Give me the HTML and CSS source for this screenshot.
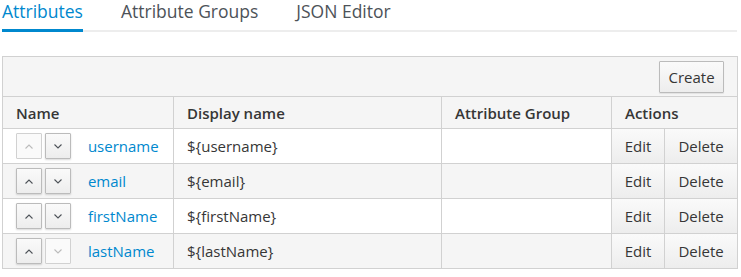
FILE: index.html
```html
<!DOCTYPE html>
<html lang="en">
<head>
  <meta charset="UTF-8" />
  <title>Attributes</title>
  <link rel="stylesheet" href="styles.css">
</head>
<body>

  <!-- Tabs -->
  <ul class="tabs">
    <li class="active"><a href="#">Attributes</a></li>
    <li><a href="#">Attribute Groups</a></li>
    <li><a href="#">JSON Editor</a></li>
  </ul>

  <!-- Attribute table -->
  <table class="attr-table">
    <colgroup>
      <col class="c-name">
      <col class="c-display">
      <col class="c-group">
      <col class="c-edit">
      <col class="c-delete">
    </colgroup>
    <thead>
      <tr class="toolbar">
        <th colspan="5"><button class="btn">Create</button></th>
      </tr>
      <tr class="head">
        <th>Name</th>
        <th>Display name</th>
        <th>Attribute Group</th>
        <th colspan="2">Actions</th>
      </tr>
    </thead>
    <tbody>
      <tr>
        <td class="name-cell">
          <button class="arrow" disabled><svg viewBox="0 0 8 5"><path d="M0.5 4.5 L4 1 L7.5 4.5"/></svg></button><button class="arrow down"><svg viewBox="0 0 8 5"><path d="M0.5 0.5 L4 4 L7.5 0.5"/></svg></button>
          <a href="#">username</a>
        </td>
        <td>${username}</td>
        <td></td>
        <td class="act"><button class="cell-btn">Edit</button></td>
        <td class="act"><button class="cell-btn">Delete</button></td>
      </tr>
      <tr>
        <td class="name-cell">
          <button class="arrow"><svg viewBox="0 0 8 5"><path d="M0.5 4.5 L4 1 L7.5 4.5"/></svg></button><button class="arrow down"><svg viewBox="0 0 8 5"><path d="M0.5 0.5 L4 4 L7.5 0.5"/></svg></button>
          <a href="#">email</a>
        </td>
        <td>${email}</td>
        <td></td>
        <td class="act"><button class="cell-btn">Edit</button></td>
        <td class="act"><button class="cell-btn">Delete</button></td>
      </tr>
      <tr>
        <td class="name-cell">
          <button class="arrow"><svg viewBox="0 0 8 5"><path d="M0.5 4.5 L4 1 L7.5 4.5"/></svg></button><button class="arrow down"><svg viewBox="0 0 8 5"><path d="M0.5 0.5 L4 4 L7.5 0.5"/></svg></button>
          <a href="#">firstName</a>
        </td>
        <td>${firstName}</td>
        <td></td>
        <td class="act"><button class="cell-btn">Edit</button></td>
        <td class="act"><button class="cell-btn">Delete</button></td>
      </tr>
      <tr>
        <td class="name-cell">
          <button class="arrow"><svg viewBox="0 0 8 5"><path d="M0.5 4.5 L4 1 L7.5 4.5"/></svg></button><button class="arrow down" disabled><svg viewBox="0 0 8 5"><path d="M0.5 0.5 L4 4 L7.5 0.5"/></svg></button>
          <a href="#">lastName</a>
        </td>
        <td>${lastName}</td>
        <td></td>
        <td class="act"><button class="cell-btn">Edit</button></td>
        <td class="act"><button class="cell-btn">Delete</button></td>
      </tr>
    </tbody>
  </table>

</body>
</html>
```

FILE: styles.css
```css
body {
  font-family: "Open Sans", "Liberation Sans", sans-serif;
  font-size: 15px;
  color: #363636;
  margin: 0;
  padding: 0 4px 0 2px;
  background: #fff;
}
.tabs {
  list-style: none;
  margin: 0;
  padding: 0;
  display: flex;
  gap: 38px;
  border-bottom: 2px solid #ededed;
  height: 30px;
}
.tabs li {
  height: 30px;
}
.tabs a {
  display: block;
  font-size: 17.5px;
  line-height: 22px;
  color: #4d5258;
  text-decoration: none;
  padding-bottom: 7px;
}
.tabs li.active a {
  color: #0088ce;
  border-bottom: 3px solid #0088ce;
}
.attr-table {
  margin-top: 24px;
  width: 735px;
  border-collapse: collapse;
  border: 1px solid #d1d1d1;
  table-layout: fixed;
}
.c-name { width: 171px; }
.c-display { width: 268px; }
.c-group { width: 170px; }
.c-edit { width: 53px; }
.c-delete { width: 73px; }
.attr-table th, .attr-table td {
  border: 1px solid #d1d1d1;
  text-align: left;
  padding: 0 13px;
  height: 34px;
}
.toolbar th {
  background: #f5f5f5;
  height: 39px;
  text-align: right;
  padding-right: 13px;
}
.head th {
  background: #f5f5f5;
  font-weight: 600;
  height: 31px;
}
.btn {
  font-family: inherit;
  font-size: 15px;
  color: #363636;
  background: linear-gradient(#fafafa, #ededed);
  border: 1px solid #bbb;
  border-radius: 1px;
  box-shadow: 0 1px 1px rgba(3, 3, 3, 0.08);
  width: 65px;
  height: 32px;
  padding: 0;
}
tbody tr:nth-child(even) td {
  background: #f5f5f5;
}
.name-cell {
  white-space: nowrap;
}
.arrow {
  width: 26px;
  height: 26px;
  padding: 0;
  margin-right: 3px;
  vertical-align: middle;
  background: linear-gradient(#fafafa, #ededed);
  border: 1px solid #bbb;
  border-radius: 1px;
  box-shadow: 0 1px 2px rgba(3, 3, 3, 0.15);
}
.arrow svg {
  display: block;
  width: 8px;
  height: 5px;
  margin: 0 auto;
  fill: none;
  stroke: #4d5258;
  stroke-width: 1.1;
}
.arrow.down {
  margin-right: 0;
}
.arrow:disabled {
  background: #fafafa;
  border-color: #d1d1d1;
  box-shadow: none;
}
.arrow:disabled svg {
  stroke: #bbb;
}
.name-cell a {
  color: #0088ce;
  text-decoration: none;
  margin-left: 13px;
  vertical-align: middle;
}
.attr-table td.act {
  padding: 0;
}
.cell-btn {
  display: block;
  width: 100%;
  height: 34px;
  font-family: inherit;
  font-size: 15px;
  color: #363636;
  border: none;
  background: linear-gradient(#fafafa, #ededed);
  padding: 0;
}
```
